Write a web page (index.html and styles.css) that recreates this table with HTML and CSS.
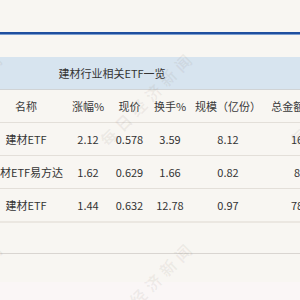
FILE: index.html
```html
<!DOCTYPE html>
<html lang="zh">
<head>
<meta charset="utf-8">
<link rel="stylesheet" href="styles.css">
</head>
<body>
<div class="page">
  <div class="topbar"></div>
  <div class="title-band"><div class="title">建材行业相关ETF一览</div></div>
  <div class="table">
    <div class="row head">
      <div>名称</div><div>涨幅%</div><div>现价</div><div>换手%</div><div>规模（亿份）</div><div>总金额(亿)</div>
    </div>
    <div class="row">
      <div>建材ETF</div><div>2.12</div><div>0.578</div><div>3.59</div><div>8.12</div><div>16</div>
    </div>
    <div class="row">
      <div>建材ETF易方达</div><div>1.62</div><div>0.629</div><div>1.66</div><div>0.82</div><div>8</div>
    </div>
    <div class="row last">
      <div>建材ETF</div><div>1.44</div><div>0.632</div><div>12.78</div><div>0.97</div><div>78</div>
    </div>
    <div class="row empty"></div>
  </div>
  <div class="filler"></div>
  <div class="foot"></div>
  <div class="watermarks">
    <div class="wm"><span>每日经济新闻</span></div>
    <div class="wm"><span>每日经济新闻</span></div>
    <div class="wm"><span>每日经济新闻</span></div>
    <div class="wm"><span>每日经济新闻</span></div>
    <div class="wm"><span>每日经济新闻</span></div>
    <div class="wm"><span>每日经济新闻</span></div>
  </div>
</div>
</body>
</html>
```

FILE: styles.css
```css
html, body {
  margin: 0;
  padding: 0;
}
body {
  width: 300px;
  height: 300px;
  overflow: hidden;
  background: #f8f6f2;
  font-family: "Noto Sans CJK SC", "Noto Sans", sans-serif;
  font-size: 11px;
  color: #333;
}
.page {
  position: relative;
  width: 300px;
  height: 300px;
  overflow: hidden;
}
.topbar {
  margin-top: 32px;
  height: 2px;
  background: #1f4f9f;
  border-bottom: 1px solid #7c9ecf;
}
.title-band {
  margin-top: 22px;
  height: 32px;
  background: #d7e4ef;
  border-bottom: 1px solid #d0d3d5;
  display: flex;
  align-items: center;
}
.title {
  width: 224px;
  text-align: center;
  color: #333;
}
.table {
  margin-left: -16px;
  width: 343px;
}
.row {
  display: grid;
  grid-template-columns: 84px 40px 43px 38px 78px 60px;
  height: 32px;
  align-items: center;
  border-bottom: 1px solid #e3dfd9;
  white-space: nowrap;
}
.row > div {
  text-align: center;
}
.row.head {
  color: #3a3a3a;
}
.row.last {
  border-bottom: 2px solid #ebe7e1;
}
.row.empty {
  height: 30px;
  border-bottom: 1px solid #d9d5d1;
}
.filler {
  height: 28px;
}
.foot {
  height: 18px;
  background: #faf6f6;
}
.watermarks {
  position: absolute;
  top: 3px;
  left: -138px;
  display: grid;
  grid-template-columns: repeat(3, 190px);
  grid-auto-rows: 190px;
  pointer-events: none;
}
.wm {
  display: flex;
  align-items: center;
  justify-content: center;
}
.wm span {
  display: block;
  transform: rotate(-45deg);
  font-size: 16px;
  font-weight: 700;
  letter-spacing: 5px;
  white-space: nowrap;
  color: rgba(120, 110, 100, 0.09);
  font-family: "Noto Sans CJK SC", sans-serif;
}
```
